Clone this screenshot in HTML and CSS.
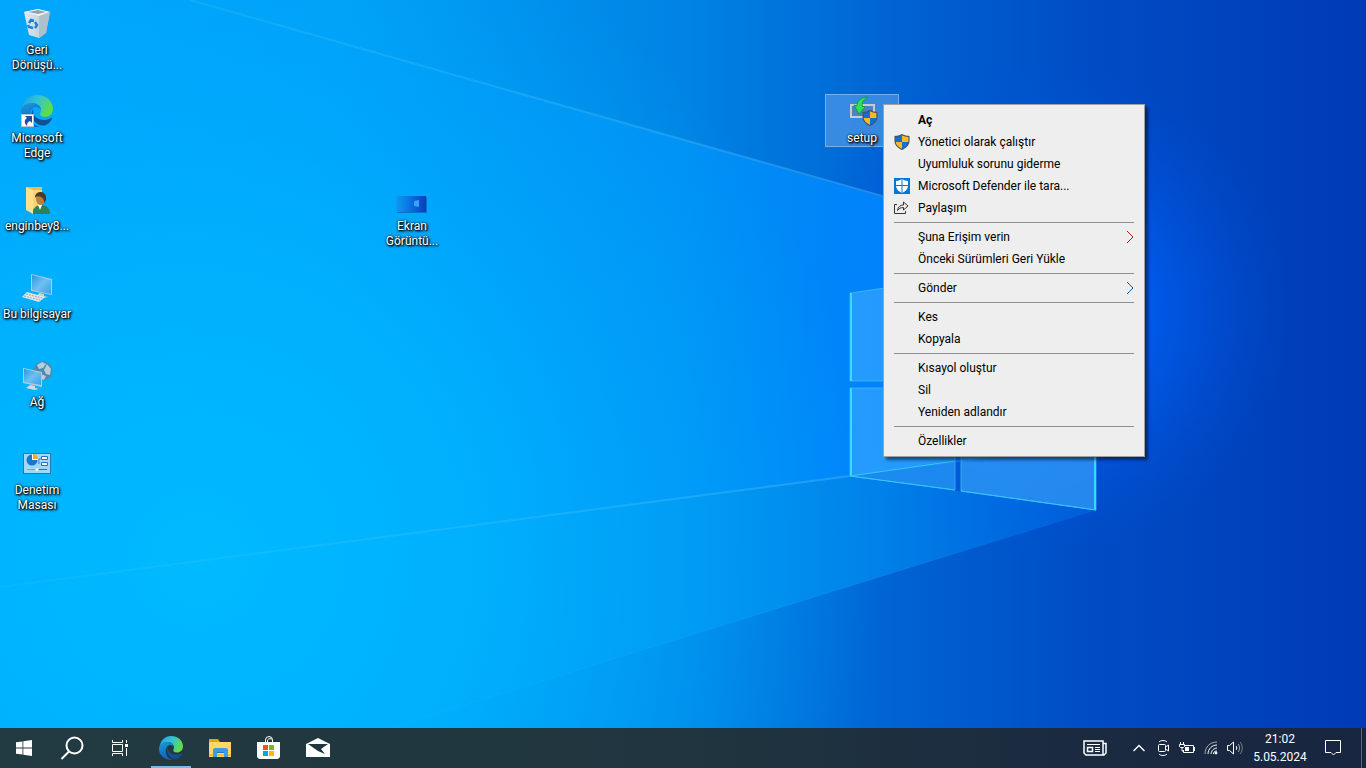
FILE: index.html
```html
<!DOCTYPE html>
<html lang="tr">
<head>
<meta charset="UTF-8">
<meta name="viewport" content="width=device-width, initial-scale=1.0">
<title>Masaüstü</title>
<link rel="stylesheet" href="styles.css">
</head>
<body>

<!-- shared icons and gradients -->
<svg class="defs" width="0" height="0" aria-hidden="true">
  <defs>
    <linearGradient id="edgeTop" x1="0" y1="0" x2="1" y2="0.4">
      <stop offset="0" stop-color="#1b9de2"/>
      <stop offset="0.5" stop-color="#2fc3d8"/>
      <stop offset="1" stop-color="#5fdc4c"/>
    </linearGradient>
    <linearGradient id="edgeLow" x1="0" y1="0" x2="0.4" y2="1">
      <stop offset="0" stop-color="#1c9ae0"/>
      <stop offset="1" stop-color="#0f5fb4"/>
    </linearGradient>
    <linearGradient id="screen" x1="0" y1="0" x2="1" y2="1">
      <stop offset="0" stop-color="#2f95dc"/>
      <stop offset="0.5" stop-color="#6cc1f2"/>
      <stop offset="1" stop-color="#3a9fe4"/>
    </linearGradient>
    <linearGradient id="thumb">
      <stop offset="0" stop-color="#0b9bf0"/>
      <stop offset="0.5" stop-color="#0a6fe2"/>
      <stop offset="1" stop-color="#0a3cb8"/>
    </linearGradient>
    <linearGradient id="bin">
      <stop offset="0" stop-color="#dfe9f0"/>
      <stop offset="0.6" stop-color="#c3d4df"/>
      <stop offset="1" stop-color="#9fb4c2"/>
    </linearGradient>
  </defs>
  <symbol id="edge" viewBox="0 0 32 32">
    <path fill="url(#edgeTop)" d="M1 14C2 6 8 0 16 0c9 0 16 6 16 14 0 5-4 8-8 8-3 0-5-1-5-3 0-1 1-2 1-4 0-4-4-7-8-7-6 0-10 3-11 6z"/>
    <path fill="url(#edgeLow)" d="M0 17c0-6 5-9 11-9 5 0 9 3 9 7-1-2-3-3-5-3-4 0-6 4-6 8 0 6 4 11 10 12C8 33 0 26 0 17z"/>
    <path fill="#124f94" d="M13 13c-2 2-3 5-2 9 2 6 8 10 14 8 2-1 5-4 6-6 0-1 0-1-1-1-2 1-4 2-7 2-6 0-11-4-11-8 0-2 0-3 1-4z"/>
  </symbol>
  <symbol id="shield" viewBox="0 0 16 16">
    <path fill="#4b4f55" d="M8 0c2 1 5 2 7.500 2v5c0 4-3 7-7.500 9C3.500 14 .5 11 .5 7V2C3 2 6 1 8 0z"/>
    <path fill="#1270d0" d="M8 1.300V8H1.600V3C4 3 6 2.300 8 1.300z"/>
    <path fill="#fdb827" d="M8 1.300V8h6.400V3C12 3 10 2.300 8 1.300z"/>
    <path fill="#fdb827" d="M8 8v6.800C4.500 13.200 2 11 1.600 8z"/>
    <path fill="#1270d0" d="M8 8v6.800c3.500-1.600 6-3.800 6.400-6.800z"/>
  </symbol>
</svg>

<main class="desktop">
  <svg class="wallpaper" viewBox="0 0 1366 728" preserveAspectRatio="xMidYMid slice" aria-hidden="true">
    <defs>
      <linearGradient id="base">
        <stop offset="0" stop-color="#00a6fb"/>
        <stop offset="0.25" stop-color="#00a0f6"/>
        <stop offset="0.5" stop-color="#0084e4"/>
        <stop offset="0.65" stop-color="#0064d4"/>
        <stop offset="0.8" stop-color="#004cc4"/>
        <stop offset="1" stop-color="#003ab6"/>
      </linearGradient>
      <radialGradient id="cyan" gradientUnits="userSpaceOnUse" cx="200" cy="560" r="680">
        <stop offset="0" stop-color="#00baff"/>
        <stop offset="0.4" stop-color="#00b4ff" stop-opacity="0.85"/>
        <stop offset="1" stop-color="#00a8ff" stop-opacity="0"/>
      </radialGradient>
      <radialGradient id="glow" gradientUnits="userSpaceOnUse" cx="1040" cy="310" r="250">
        <stop offset="0" stop-color="#0068ff"/>
        <stop offset="0.4" stop-color="#0060f8" stop-opacity="0.8"/>
        <stop offset="1" stop-color="#0050d8" stop-opacity="0"/>
      </radialGradient>
      <linearGradient id="beam" gradientUnits="userSpaceOnUse" x1="200" y1="0" x2="1000" y2="0">
        <stop offset="0" stop-color="#00a4ff" stop-opacity="0.1"/>
        <stop offset="0.6" stop-color="#0096fb" stop-opacity="0.7"/>
        <stop offset="0.85" stop-color="#0086ff" stop-opacity="0.9"/>
        <stop offset="1" stop-color="#007cff"/>
      </linearGradient>
      <linearGradient id="lowBeam" gradientUnits="userSpaceOnUse" x1="0" y1="0" x2="1096" y2="0">
        <stop offset="0.3" stop-color="#00b4ff" stop-opacity="0"/>
        <stop offset="0.6" stop-color="#00a0f6" stop-opacity="0.5"/>
        <stop offset="0.8" stop-color="#0088ee" stop-opacity="0.8"/>
        <stop offset="1" stop-color="#0064e4" stop-opacity="0.6"/>
      </linearGradient>
      <linearGradient id="ray" gradientUnits="userSpaceOnUse" x1="0" y1="0" x2="1096" y2="0">
        <stop offset="0" stop-color="#3fc8ff" stop-opacity="0.15"/>
        <stop offset="0.8" stop-color="#40b8ff" stop-opacity="0.5"/>
        <stop offset="1" stop-color="#2a90ff" stop-opacity="0.3"/>
      </linearGradient>
    </defs>
    <rect width="1366" height="728" fill="url(#base)"/>
    <rect width="1366" height="728" fill="url(#glow)"/>
    <path fill="url(#beam)" d="M190 0l800 228v230L850 476 0 587V0z"/>
    <path fill="url(#lowBeam)" d="M0 587l850-111 246 34-706 218H0z"/>
    <rect width="1366" height="728" fill="url(#cyan)"/>
    <path fill="none" stroke="url(#ray)" stroke-width="2" d="M190 0l720 204M0 587l850-111"/>
    <path fill="none" stroke="url(#ray)" stroke-opacity="0.3" d="M390 728l706-218"/>
    <g fill="#38a8ff" fill-opacity="0.65" stroke="#4cc0ff" stroke-opacity="0.7">
      <path d="M850 293l105-15v103H850zM850 388h105v102l-105-14z"/>
      <path d="M961 277l135-20v124H961zM961 388h135v122l-135-19z"/>
    </g>
    <path fill="#0f84ee" fill-opacity="0.35" d="M850 476l105-16v30z"/>
    <path fill="none" stroke="#36dcff" stroke-width="2" d="M851 293v88M851 388v88M1095 388v122"/>
    <path fill="none" stroke="#36c8ff" d="M850 476l105-15M850 476l105 14M961 491l135 19"/>
  </svg>

  <ul class="icons">
    <li>
      <button class="icon">
        <svg viewBox="0 0 32 32">
          <path fill="url(#bin)" d="M3 5l14-3 12 3-4 21-7 5-10-3z"/>
          <path fill="#eef4f8" d="M3 5l14-3 12 3-11 4z"/>
          <path fill="#8fa3b0" d="M7 5l10-2 8 2-8 2z"/>
          <path fill="#adc0cc" d="M18 9l11-4-4 21-7 5z"/>
          <g fill="none" stroke="#1d7fd6" stroke-width="2.400">
            <path d="M8 16l2-3 3 1M14 15l2 3-2 3M12 21l-4-1-1-2"/>
          </g>
        </svg>
        <span>Geri<br>Dönüşü...</span>
      </button>
    </li>
    <li>
      <button class="icon">
        <svg viewBox="0 0 32 32">
          <use href="#edge"/>
          <rect x="0.500" y="19.500" width="12" height="12" fill="#fff" stroke="#b8c4cc"/>
          <path fill="#1f4f9c" d="M4 21h7v7l-2-2c-2 1-3 2-3 5-3-3-3-6 0-8z"/>
        </svg>
        <span>Microsoft<br>Edge</span>
      </button>
    </li>
    <li>
      <button class="icon">
        <svg viewBox="0 0 32 32">
          <path fill="#e8bd4e" d="M5 4h16v22H5z"/>
          <path fill="#ffe08c" d="M5 4l7 3v24l-7-4z"/>
          <path fill="#f9d673" d="M12 7h9v18h-9z"/>
          <path fill="#2f7f58" d="M12 31c0-6 3-9 8-9s9 3 9 9z"/>
          <path fill="#fff" d="M17 22h4l-2 5z"/>
          <ellipse cx="19.500" cy="16" rx="4.500" ry="6" fill="#b9803f"/>
          <path fill="#4c3a2a" d="M14 15c0-5 3-6 6-6s6 3 5 8l-2 3c0-4-1-5-3-6s-5-1-6 1z"/>
        </svg>
        <span>enginbey8...</span>
      </button>
    </li>
    <li>
      <button class="icon">
        <svg viewBox="0 0 32 32">
          <path fill="#b8c8d4" d="M10 3l21 5v16l-21-4z"/>
          <path fill="url(#screen)" d="M11 4l19 5v14l-19-4z"/>
          <path fill="#c9d2d8" d="M18 22l5 1v2l4 1-5 1-6-2z"/>
          <path fill="#e3e7ea" d="M6 21l18 5-6 5-17-5z"/>
          <path stroke="#9aa6ae" d="M5 23l16 4M3 25l16 4" stroke-dasharray="2 1"/>
        </svg>
        <span>Bu bilgisayar</span>
      </button>
    </li>
    <li>
      <button class="icon">
        <svg viewBox="0 0 32 32">
          <circle cx="22" cy="12" r="9.500" fill="#5088ae"/>
          <path fill="#b4cedc" d="M16 6l5-3 4 2-3 4-4 1zM26 5l4 5-1 6-4-1-2-4zM20 15l5 2-2 4-4-1z"/>
          <path fill="#b8c8d4" d="M2 9l19 4v15L2 24z"/>
          <path fill="url(#screen)" d="M3 10l17 4v12L3 23z"/>
          <path fill="#d2d9de" d="M9 26l5 1v2l4 1-5 1-8-2z"/>
        </svg>
        <span>Ağ</span>
      </button>
    </li>
    <li>
      <button class="icon">
        <svg viewBox="0 0 32 32">
          <rect x="2.500" y="6.500" width="27" height="20" fill="#9fd8f8" stroke="#2878b4"/>
          <circle cx="11" cy="13" r="5.500" fill="#1a78cc"/>
          <path fill="#fff" d="M11 13V7a6 6 0 0 1 6 6z"/>
          <path fill="#f7a823" d="M12 12V7a5 5 0 0 1 5 5z"/>
          <path fill="#fff" stroke="#1a78cc" d="M20.500 9.500h6v3h-6zM20.500 15.500h6v3h-6zM18 17v-5h2"/>
          <path stroke="#f08c1e" d="M6 22.500h10"/>
          <path stroke="#1a78cc" d="M16 22.500h10"/>
          <circle cx="16" cy="22.500" r="1.500" fill="#fff"/>
        </svg>
        <span>Denetim<br>Masası</span>
      </button>
    </li>
    <li class="at-capture">
      <button class="icon">
        <svg viewBox="0 0 32 32">
          <rect x="1" y="14" width="30" height="16" fill="#03438c" fill-opacity="0.5"/>
          <rect x="0" y="13" width="30" height="16" fill="url(#thumb)"/>
          <path fill="#3f9ff8" d="M18 18l5-1v7l-5-1z"/>
        </svg>
        <span>Ekran<br>Görüntü...</span>
      </button>
    </li>
    <li class="at-setup">
      <button class="icon selected">
        <svg viewBox="0 0 32 32">
          <path fill="#4a82c4" stroke="#c8ccd0" stroke-width="2" d="M5 10h23v12H5z"/>
          <path fill="#2ee05a" stroke="#12a038" d="M22 2c-8 0-11 5-11 9l-3-1 5 9 6-7-3-1c0-4 2-7 6-9z"/>
          <use href="#shield" x="16" y="15" width="16" height="16"/>
        </svg>
        <span>setup</span>
      </button>
    </li>
  </ul>

  <div class="menu" role="menu">
    <button role="menuitem" class="default">Aç</button>
    <button role="menuitem">
      <svg viewBox="0 0 16 16"><use href="#shield"/></svg>
      Yönetici olarak çalıştır
    </button>
    <button role="menuitem">Uyumluluk sorunu giderme</button>
    <button role="menuitem">
      <svg viewBox="0 0 16 16">
        <path fill="#0078d7" d="M0 0h16v16H0z"/>
        <path fill="#fff" d="M8 1c2 1 4 2 6 2v4c0 4-2 6-6 8-4-2-6-4-6-8V3c2 0 4-1 6-2z"/>
        <path stroke="#0078d7" d="M8 1v14M2 7.500h12"/>
      </svg>
      Microsoft Defender ile tara...
    </button>
    <button role="menuitem">
      <svg viewBox="0 0 16 16" fill="none" stroke="#333">
        <path d="M3 4.500H.5v9h11V11"/>
        <path d="M9.500 5V2l4.500 4-4.500 4V7.500C6.500 7.500 5 8.500 3.500 10.500 4 7 6 5 9.500 5z"/>
      </svg>
      Paylaşım
    </button>
    <hr>
    <button role="menuitem">
      Şuna Erişim verin
      <svg class="arrow warm" viewBox="0 0 8 14"><path d="M1 1l6 6-6 6"/></svg>
    </button>
    <button role="menuitem">Önceki Sürümleri Geri Yükle</button>
    <hr>
    <button role="menuitem">
      Gönder
      <svg class="arrow" viewBox="0 0 8 14"><path d="M1 1l6 6-6 6"/></svg>
    </button>
    <hr>
    <button role="menuitem">Kes</button>
    <button role="menuitem">Kopyala</button>
    <hr>
    <button role="menuitem">Kısayol oluştur</button>
    <button role="menuitem">Sil</button>
    <button role="menuitem">Yeniden adlandır</button>
    <hr>
    <button role="menuitem">Özellikler</button>
  </div>
</main>

<footer class="taskbar">
  <nav class="system">
    <button aria-label="Başlat">
      <svg width="16" height="16" viewBox="0 0 16 16" fill="#fff"><path d="M0 2.300L6.500 1.400v6.100H0zM7.300 1.200L16 0v7.500H7.300zM0 8.400h6.500v6.200L0 13.700zM7.300 8.400H16V16l-8.700-1.200z"/></svg>
    </button>
    <button aria-label="Ara">
      <svg width="24" height="24" viewBox="0 0 24 24" fill="none" stroke="#fff" stroke-width="2"><circle cx="14.500" cy="9.500" r="8"/><path d="M9 15.500L1.500 23"/></svg>
    </button>
    <button aria-label="Görev Görünümü">
      <svg width="16" height="16" viewBox="0 0 16 16" fill="none" stroke="#fff"><path d="M.5 0v2.500h10V0M.5 4.500h10v7H.5zM.5 16v-2.500h10V16M14.500 0v3M14.500 8v8"/><path fill="#fff" stroke="none" d="M13 4h3v3h-3z"/></svg>
    </button>
  </nav>
  <nav class="apps">
    <button class="running" aria-label="Microsoft Edge">
      <svg width="24" height="24"><use href="#edge"/></svg>
    </button>
    <button aria-label="Dosya Gezgini">
      <svg width="22" height="20" viewBox="0 0 22 20"><path fill="#e5a312" d="M0 1h9l2 3h11v6H0z"/><path fill="#ffd767" d="M0 4h22v15H0z"/><path fill="#f4bd38" d="M0 16h22v2H0z"/><path fill="#3c9be8" d="M4 19v-8l2-1h11l2 1v8h-4v-5H8v5z"/><path fill="#1979ca" d="M8 14h7v1H8z"/></svg>
    </button>
    <button aria-label="Microsoft Store">
      <svg width="24" height="24" viewBox="0 0 24 24"><path fill="none" stroke="#fff" d="M8.500 7V4a3.500 3.500 0 0 1 7 0v3M10.500 7V4a3 3 0 0 1 5 0"/><path fill="#fff" d="M0 6h23v15l-2 2H2l-2-2z"/><path fill="#f25022" d="M6 9h5v5H6z"/><path fill="#7fba00" d="M12 9h5v5h-5z"/><path fill="#00a4ef" d="M6 15h5v5H6z"/><path fill="#ffb900" d="M12 15h5v5h-5z"/></svg>
    </button>
    <button aria-label="Posta">
      <svg width="24" height="20" viewBox="0 0 24 20"><path fill="#fff" d="M0 6l12-6 12 6v13H0z"/><path fill="#20353d" d="M2 6h20l-7 5 4 5-7-3z"/></svg>
    </button>
  </nav>
  <div class="tray">
    <button class="news" aria-label="Haberler">
      <svg width="24" height="16" viewBox="0 0 24 16" fill="none" stroke="#fff"><path stroke-width="1.500" d="M1 1h19v14H3l-2-2zM20 3.500h3V13l-2 2h-2"/><path d="M4 4.500h13"/><path stroke-width="1.500" d="M4.500 7.500h5v4h-5z"/><path d="M12 7.500h5M12 9.500h5M12 11.500h5"/></svg>
    </button>
    <button aria-label="Gizli simgeler">
      <svg width="12" height="8" viewBox="0 0 12 8" fill="none" stroke="#fff" stroke-width="1.400"><path d="M.5 7L6 1.500 11.500 7"/></svg>
    </button>
    <button aria-label="Kamera">
      <svg width="12" height="16" viewBox="0 0 12 16" fill="none" stroke="#fff"><rect x="1.500" y="4.500" width="7" height="7" rx="1"/><path d="M8.500 7l3-2v6l-3-2M2 2c2-2 6-2 8 0M2 14c2 2 6 2 8 0"/></svg>
    </button>
    <button aria-label="Pil">
      <svg width="16" height="12" viewBox="0 0 16 12" fill="none" stroke="#fff"><path d="M6 3.500h8.500v7H4.500V8M15.500 5v4M1.500 0v2M4.500 0v2M.5 2.500h5v2l-1 1h-3l-1-1zM3 6v3h1"/><path fill="#fff" stroke="none" d="M6 5h4v4H6z"/></svg>
    </button>
    <button aria-label="Wi-Fi">
      <svg width="14" height="14" viewBox="0 0 14 14" fill="none" stroke="#fff"><path stroke-opacity="0.600" d="M1 13C1 6 6 1 13 1"/><path d="M4 13c0-5 4-9 9-9M7 13c0-3 3-6 6-6"/><path d="M9.500 13c0-2 1-3 3.500-3"/><circle cx="12" cy="12" r="1" fill="#fff"/></svg>
    </button>
    <button aria-label="Ses">
      <svg width="16" height="14" viewBox="0 0 16 14" fill="none" stroke="#fff"><path d="M.5 4.500h2l4-3.500v12l-4-3.500h-2zM9 5c1 1 1 3 0 4"/><path stroke-opacity="0.600" d="M11 3c2 2 2 6 0 8"/><path stroke-opacity="0.400" d="M13 1c3 3 3 9 0 12"/></svg>
    </button>
    <button class="clock"><time>21:02</time><time>5.05.2024</time></button>
    <button class="notify" aria-label="Bildirimler">
      <svg width="16" height="16" viewBox="0 0 16 16" fill="none" stroke="#fff"><path d="M.5.5h15v12H11L8.500 15 6 12.500H.5z"/></svg>
    </button>
    <button class="peek" aria-label="Masaüstünü göster"></button>
  </div>
</footer>

</body>
</html>
```
FILE: styles.css
```css
* {
  box-sizing: border-box;
}
body {
  margin: 0;
  height: 100vh;
  display: flex;
  flex-direction: column;
  overflow: hidden;
  font-family: "Segoe UI", Roboto, "Noto Sans", sans-serif;
  font-size: 12px;
}
button {
  margin: 0;
  padding: 0;
  border: 0;
  background: none;
  font: inherit;
  color: inherit;
}
svg {
  display: block;
  flex: none;
}
.defs {
  position: absolute;
}

/* desktop */
.desktop {
  position: relative;
  flex: 1;
  min-height: 0;
}
.wallpaper {
  position: absolute;
  width: 100%;
  height: 100%;
}
.icons {
  position: relative;
  margin: 0;
  padding: 0;
  list-style: none;
  display: grid;
  grid-auto-columns: 75px;
  grid-auto-rows: 88px;
}
.icons li {
  grid-column: 1;
  padding: 6px 1px 6px 0;
}
.icons .at-capture {
  grid-column: 6;
  grid-row: 3;
}
.icons .at-setup {
  grid-column: 12;
  grid-row: 2;
}
.icon {
  width: 100%;
  display: flex;
  flex-direction: column;
  align-items: center;
  gap: 4px;
  border: 1px solid transparent;
  color: #fff;
  line-height: 15px;
  white-space: nowrap;
  text-shadow: 0 0 2px #000, 1px 1px 2px #000, 1px 1px 3px #000;
}
.icon svg {
  width: 32px;
  height: 32px;
}
.icon.selected {
  background: rgba(120, 180, 240, 0.45);
  border-color: rgba(150, 200, 250, 0.6);
}

/* context menu */
.menu {
  position: absolute;
  left: 883px;
  top: 104px;
  width: 262px;
  padding: 4px 0;
  background: #eee;
  border: 1px solid #a0a0a0;
  box-shadow: 3px 3px 3px rgba(0, 0, 0, 0.5);
  color: #000;
}
.menu button {
  width: 100%;
  height: 22px;
  padding: 0 10px 0 34px;
  display: flex;
  align-items: center;
}
.menu .default {
  font-weight: bold;
}
.menu svg {
  width: 16px;
  height: 16px;
  margin-left: -24px;
  margin-right: 8px;
}
.menu .arrow {
  width: 8px;
  height: 14px;
  margin: 0 0 0 auto;
  fill: none;
  stroke: #1c5c8c;
}
.menu .warm {
  stroke: #a82020;
}
.menu hr {
  height: 1px;
  margin: 3px 10px;
  border: 0;
  background: #919191;
}

/* taskbar */
.taskbar {
  height: 40px;
  flex: none;
  display: flex;
  justify-content: space-between;
  background: linear-gradient(90deg, #223a41, #20353f 50%, #1a2a40 80%, #182540);
  color: #fff;
}
.taskbar nav,
.tray {
  display: flex;
}
.taskbar button {
  display: flex;
  align-items: center;
  justify-content: center;
}
.system button {
  width: 48px;
}
.apps {
  margin-left: 2px;
  margin-right: auto;
}
.apps button {
  width: 49px;
}
.apps .running {
  background: linear-gradient(#76b9ed, #76b9ed) center bottom / 40px 2px no-repeat;
}
.tray button {
  width: 24px;
}
.tray .news {
  width: 48px;
  margin-right: 8px;
}
.tray .clock {
  width: 58px;
  margin-left: 4px;
  flex-direction: column;
  line-height: 18px;
}
.tray .notify {
  width: 48px;
  margin-right: 4px;
}
.tray .peek {
  width: 5px;
  border-left: 1px solid #5c6878;
}
```
